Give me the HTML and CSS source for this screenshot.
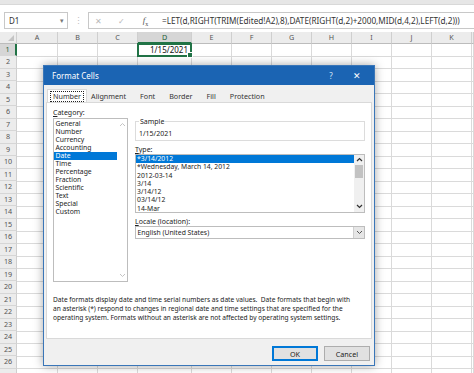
FILE: index.html
```html
<!DOCTYPE html>
<html lang="en">
<head>
  <meta charset="UTF-8">
  <title>Format Cells</title>
  <link rel="stylesheet" href="styles.css">
</head>
<body>

  <!-- FORMULA BAR -->
  <div class="top">
    <div class="ribbon-edge"></div>
    <div class="formula-bar">
      <div class="name-box"><span>D1</span><span class="drop">&#9662;</span></div>
      <div class="grip">&#8942;</div>
      <div class="formula-box">
        <span class="fb-icon">&#10005;</span>
        <span class="fb-icon">&#10003;</span>
        <span class="fb-fx"><i>f</i><sub>x</sub></span>
        <span class="formula">=LET(d,RIGHT(TRIM(Edited!A2),8),DATE(RIGHT(d,2)+2000,MID(d,4,2),LEFT(d,2)))</span>
      </div>
    </div>
  </div>

  <!-- SHEET -->
  <div class="sheet">
    <div class="rowheads">
      <div class="corner"><span></span></div>
      <div class="rh active">1</div><div class="rh">2</div><div class="rh">3</div><div class="rh">4</div>
      <div class="rh">5</div><div class="rh">6</div><div class="rh">7</div><div class="rh">8</div>
      <div class="rh">9</div><div class="rh">10</div><div class="rh">11</div><div class="rh">12</div>
      <div class="rh">13</div><div class="rh">14</div><div class="rh">15</div><div class="rh">16</div>
      <div class="rh">17</div><div class="rh">18</div><div class="rh">19</div><div class="rh">20</div>
      <div class="rh">21</div><div class="rh">22</div><div class="rh">23</div><div class="rh">24</div>
      <div class="rh">25</div><div class="rh">26</div><div class="rh"></div>
    </div>
    <div class="col col-a"><div class="ch">A</div><div class="cells"></div></div>
    <div class="col"><div class="ch">B</div><div class="cells"></div></div>
    <div class="col"><div class="ch">C</div><div class="cells"></div></div>
    <div class="col col-d">
      <div class="ch active">D</div>
      <div class="cells">
        <div class="active-cell">1/15/2021<span class="handle"></span></div>
      </div>
    </div>
    <div class="col"><div class="ch">E</div><div class="cells"></div></div>
    <div class="col"><div class="ch">F</div><div class="cells"></div></div>
    <div class="col"><div class="ch">G</div><div class="cells"></div></div>
    <div class="col"><div class="ch">H</div><div class="cells"></div></div>
    <div class="col"><div class="ch">I</div><div class="cells"></div></div>
    <div class="col"><div class="ch">J</div><div class="cells"></div></div>
    <div class="col"><div class="ch">K</div><div class="cells"></div></div>
    <div class="col col-l"><div class="ch"></div><div class="cells"></div></div>
  </div>

  <!-- FORMAT CELLS DIALOG -->
  <div class="dialog">
    <div class="dlg-title">
      <span>Format Cells</span>
      <span class="dlg-help">?</span>
      <span class="dlg-close">&#10005;</span>
    </div>
    <div class="dlg-body">
      <div class="tabs">
        <span class="tab active"><span class="focus">Number</span></span>
        <span class="tab">Alignment</span>
        <span class="tab">Font</span>
        <span class="tab">Border</span>
        <span class="tab">Fill</span>
        <span class="tab">Protection</span>
      </div>

      <div class="panel">
        <div class="panel-main">
          <div class="cat">
            <div class="lbl"><u>C</u>ategory:</div>
            <div class="listbox cat-list">
              <div class="items">
                <div>General</div>
                <div>Number</div>
                <div>Currency</div>
                <div>Accounting</div>
                <div class="selected">Date</div>
                <div>Time</div>
                <div>Percentage</div>
                <div>Fraction</div>
                <div>Scientific</div>
                <div>Text</div>
                <div>Special</div>
                <div>Custom</div>
              </div>
              <div class="vscroll">
                <svg width="7" height="5" viewBox="0 0 7 5"><polyline points="1,4 3.5,1.5 6,4" fill="none" stroke="#c4c4c4" stroke-width="1"/></svg>
                <svg width="7" height="5" viewBox="0 0 7 5"><polyline points="1,1 3.5,3.5 6,1" fill="none" stroke="#c4c4c4" stroke-width="1"/></svg>
              </div>
            </div>
          </div>

          <div class="detail">
            <fieldset class="sample">
              <legend>Sample</legend>
              <div class="sample-value">1/15/2021</div>
            </fieldset>

            <div class="lbl"><u>T</u>ype:</div>
            <div class="listbox type-list">
              <div class="items">
                <div class="selected">*3/14/2012</div>
                <div>*Wednesday, March 14, 2012</div>
                <div>2012-03-14</div>
                <div>3/14</div>
                <div>3/14/12</div>
                <div>03/14/12</div>
                <div>14-Mar</div>
              </div>
              <div class="vscroll">
                <svg width="7" height="5" viewBox="0 0 7 5"><polyline points="1,4 3.5,1.5 6,4" fill="none" stroke="#333" stroke-width="1.2"/></svg>
                <div class="thumb"></div>
                <svg class="down" width="7" height="5" viewBox="0 0 7 5"><polyline points="1,1 3.5,3.5 6,1" fill="none" stroke="#333" stroke-width="1.2"/></svg>
              </div>
            </div>

            <div class="lbl"><u>L</u>ocale (location):</div>
            <div class="select">
              <span>English (United States)</span>
              <span class="select-btn">
                <svg width="7" height="5" viewBox="0 0 7 5"><polyline points="1,1 3.5,3.5 6,1" fill="none" stroke="#555" stroke-width="1"/></svg>
              </span>
            </div>
          </div>
        </div>

        <p class="desc">Date formats display date and time serial numbers as date values.&nbsp; Date formats that begin with an asterisk (*) respond to changes in regional date and time settings that are specified for the operating system. Formats without an asterisk are not affected by operating system settings.</p>
      </div>

      <div class="buttons">
        <button class="btn default">OK</button>
        <button class="btn">Cancel</button>
      </div>
    </div>
  </div>

</body>
</html>
```

FILE: styles.css
```css
body {
  margin: 0;
  width: 474px;
  height: 373px;
  overflow: hidden;
  position: relative;
  background: white;
  font-family: 'Noto Sans', sans-serif;
  color: #222;
}

/* formula bar */
.top {
  height: 32px;
  box-sizing: border-box;
}
.ribbon-edge {
  height: 4px;
  background: #e6e6e6;
  border-bottom: 1px solid #d8d8d8;
}
.formula-bar {
  display: flex;
  height: 17px;
  margin-top: 7px;
  padding-left: 4px;
}
.name-box {
  width: 64px;
  box-sizing: border-box;
  border: 1px solid #c8c8c8;
  display: flex;
  align-items: center;
  justify-content: space-between;
  padding: 0 3px 0 4px;
  font-size: 8px;
  color: #333;
}
.drop {
  font-size: 7px;
  color: #777;
}
.grip {
  width: 20px;
  text-align: center;
  color: #c0c0c0;
  font-size: 9px;
  line-height: 17px;
}
.formula-box {
  flex: 1;
  border: 1px solid #c8c8c8;
  border-right: none;
  display: flex;
  align-items: center;
  white-space: nowrap;
  overflow: hidden;
}
.fb-icon {
  width: 23px;
  text-align: center;
  color: #b8b8b8;
  font-size: 8px;
}
.fb-icon:first-child {
  margin-left: -2px;
}
.fb-fx {
  width: 25px;
  text-align: center;
  font-family: 'Liberation Serif', serif;
  font-size: 9px;
  color: #555;
}
.fb-fx sub {
  font-size: 6px;
}
.formula {
  padding-left: 4px;
  font-size: 8.2px;
  color: #333;
}

/* sheet grid */
.sheet {
  display: flex;
  height: 341px;
  overflow: hidden;
}
.rowheads {
  width: 17px;
  flex: none;
  background: #ececec;
}
.corner {
  height: 11.75px;
  box-sizing: border-box;
  border-right: 1px solid #cfcfcf;
  border-bottom: 1px solid #bcbcbc;
  position: relative;
}
.corner span {
  position: absolute;
  right: 2px;
  bottom: 2px;
  border-left: 6px solid transparent;
  border-bottom: 6px solid #c4c4c4;
}
.rh {
  height: 12.5px;
  box-sizing: border-box;
  border-right: 1px solid #cfcfcf;
  border-bottom: 1px solid #d6d6d6;
  font-size: 7.2px;
  line-height: 11.5px;
  text-align: center;
  color: #555;
}
.rh.active {
  background: #d6d6d6;
  border-right: 2px solid #217346;
  color: #1d5e37;
}
.col {
  width: 40px;
  flex: none;
  display: flex;
  flex-direction: column;
}
.col-a {
  width: 41px;
}
.col-d {
  width: 54px;
}
.col-l {
  width: 2px;
}
.ch {
  height: 11.75px;
  box-sizing: border-box;
  background: #ececec;
  border-right: 1px solid #cfcfcf;
  border-bottom: 1px solid #bcbcbc;
  font-size: 7.2px;
  line-height: 11px;
  text-align: center;
  color: #555;
}
.ch.active {
  background: #d6d6d6;
  border-bottom: 2px solid #217346;
  color: #1d5e37;
}
.cells {
  flex: 1;
  border-right: 1px solid #dadada;
  background-image: repeating-linear-gradient(to bottom, transparent 0, transparent 11.5px, #dadada 11.5px, #dadada 12.5px);
}
.active-cell {
  position: relative;
  height: 13.5px;
  margin: -0.5px -1px 0 -1px;
  box-sizing: border-box;
  border: 2px solid #217346;
  background: white;
  font-size: 8px;
  line-height: 9.5px;
  text-align: right;
  padding-right: 2px;
  color: #111;
}
.handle {
  position: absolute;
  right: -3px;
  bottom: -3px;
  width: 4px;
  height: 4px;
  background: #217346;
  border: 1px solid white;
}

/* dialog */
.dialog {
  position: absolute;
  left: 43px;
  top: 65px;
  width: 332px;
  height: 301px;
  box-sizing: border-box;
  border: 1px solid #3a76b8;
  background: #f0f0f0;
  box-shadow: 0 0 9px rgba(0,0,0,0.35);
  display: flex;
  flex-direction: column;
  font-size: 7px;
}
.dlg-title {
  height: 19px;
  flex: none;
  background: #1b64b3;
  color: white;
  display: flex;
  align-items: center;
  padding: 0 4px 0 8px;
  font-size: 8px;
}
.dlg-help {
  margin-left: auto;
  width: 20px;
  margin-right: 3px;
  text-align: center;
  color: #d8e6f5;
}
.dlg-close {
  width: 26px;
  text-align: center;
  font-size: 9px;
}
.dlg-body {
  flex: 1;
  display: flex;
  flex-direction: column;
  padding: 0 2px;
}
.tabs {
  display: flex;
  margin-top: 4px;
  height: 13px;
  align-items: stretch;
  padding-left: 1px;
  font-size: 7.2px;
}
.tab {
  display: flex;
  align-items: center;
  padding: 0 7px;
  color: #333;
}
.tab.active {
  background: white;
  border: 1px solid #d9d9d9;
  border-bottom: none;
  margin-bottom: -1px;
  padding: 0 2px;
  margin-right: -3px;
}
.focus {
  border: 1px dotted #222;
  padding: 0 2px;
  line-height: 9px;
}
.panel {
  flex: 1;
  background: white;
  border: 1px solid #d9d9d9;
  padding: 5px 6px 0 6px;
}
.panel-main {
  display: flex;
  gap: 7px;
}
.cat {
  width: 75px;
}
.lbl {
  line-height: 9px;
  height: 9px;
  color: #222;
}
.cat .lbl {
  margin-bottom: 1px;
}
.listbox {
  border: 1px solid #bdbdbd;
  display: flex;
  font-size: 6.8px;
}
.items {
  flex: 1;
}
.cat-list {
  height: 164px;
  box-sizing: border-box;
}
.cat-list .items {
  padding-top: 1px;
}
.cat-list .items div {
  line-height: 8px;
  height: 8px;
  padding-left: 1.5px;
}
.selected {
  background: #0078d7;
  color: white;
}
.vscroll {
  width: 10px;
  display: flex;
  flex-direction: column;
  align-items: center;
  justify-content: space-between;
  padding: 3px 0;
}
.detail {
  width: 230px;
  padding-top: 8.5px;
}
.sample {
  margin: 0;
  padding: 0 3px 2px 3px;
  border: 1px solid #dcdcdc;
  min-width: 0;
}
.sample legend {
  padding: 0 1px;
  line-height: 9px;
}
.sample-value {
  line-height: 9px;
  padding-top: 3.5px;
}
.detail .lbl {
  margin-top: 3.5px;
  margin-bottom: 0.5px;
}
.type-list {
  height: 59px;
  box-sizing: border-box;
}
.type-list .items div {
  line-height: 8.25px;
  height: 8.25px;
  padding-left: 1px;
}
.type-list .vscroll {
  width: 10px;
  background: #f0f0f0;
  padding: 2px 0 3px 0;
  justify-content: flex-start;
}
.thumb {
  width: 8px;
  height: 13px;
  background: #c2c2c2;
  margin-top: 3px;
}
.type-list .down {
  margin-top: auto;
}
.select {
  height: 13px;
  box-sizing: border-box;
  border: 1px solid #bdbdbd;
  display: flex;
  align-items: center;
  padding-left: 1.5px;
  font-size: 6.8px;
}
.select-btn {
  margin-left: auto;
  width: 10px;
  height: 11px;
  background: #e6e6e6;
  border-left: 1px solid #cfcfcf;
  display: flex;
  align-items: center;
  justify-content: center;
}
.desc {
  margin: 12.5px 0 0 0;
  width: 305px;
  line-height: 9px;
  font-size: 6.6px;
  color: #222;
}
.buttons {
  height: 26px;
  flex: none;
  display: flex;
  justify-content: flex-end;
  align-items: flex-start;
  gap: 6px;
  padding: 7px 2px 0 0;
  box-sizing: border-box;
}
.btn {
  width: 46px;
  height: 15px;
  box-sizing: border-box;
  background: #e1e1e1;
  border: 1px solid #adadad;
  font-family: 'Noto Sans', sans-serif;
  font-size: 7.2px;
  color: #222;
  padding: 0;
}
.btn.default {
  border: 1px solid #0078d7;
  box-shadow: inset 0 0 0 1px #0078d7;
}
```
